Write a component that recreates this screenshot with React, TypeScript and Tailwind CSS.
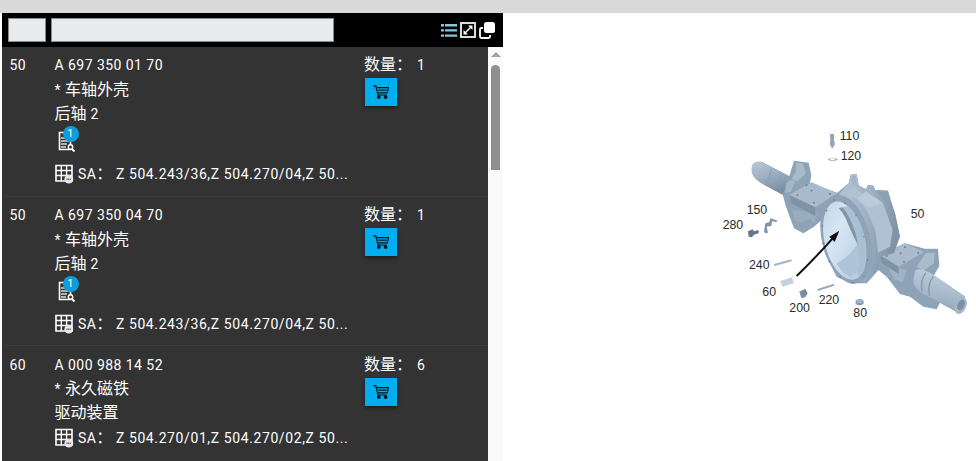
import React from "react";

const font = { fontFamily: '"Roboto","Noto Sans CJK SC",sans-serif' };

function T({ s }: { s: string }) {
  return (
    <>
      {s.split(/([\u4e00-\u9fff：]+)/).map((p, i) =>
        /[\u4e00-\u9fff：]/.test(p) ? (
          <span key={i} className="text-[16px] tracking-normal">{p}</span>
        ) : (
          <span key={i}>{p}</span>
        )
      )}
    </>
  );
}

function DocIcon() {
  return (
    <span className="relative block w-[22px] h-[26px]">
      <svg width="20" height="22" viewBox="0 0 20 22" className="absolute left-0 top-[4px]">
        <path d="M3.5 1.5H11L14.5 5V18.5H3.5Z" fill="none" stroke="#fff" strokeWidth="1.6" />
        <path d="M5 7H13M5 10H13M5 13H11M5 16H10" stroke="#ddd" strokeWidth="1.5" />
        <circle cx="14.5" cy="16" r="2.2" fill="#333" stroke="#fff" strokeWidth="1.4" />
        <path d="M16 18L18.5 20.5" stroke="#fff" strokeWidth="1.8" />
      </svg>
      <span className="absolute left-[7px] top-[-1px] w-4 h-4 rounded-full bg-[#0d9ddb] text-white text-[11px] leading-4 text-center">1</span>
    </span>
  );
}

function GridIcon() {
  return (
    <svg width="20" height="20" viewBox="0 0 20 20" className="shrink-0">
      <path d="M1 1.5H17V17H1Z" fill="none" stroke="#fff" strokeWidth="1.6" />
      <path d="M1 6.5H17M1 11.5H17M6.3 1.5V17M11.6 1.5V17" stroke="#fff" strokeWidth="1.4" />
      <circle cx="13.8" cy="15.2" r="4.4" fill="#e8e8e8" />
      <path d="M11.5 15.2H16" stroke="#555" strokeWidth="1.6" strokeDasharray="1 .6" />
    </svg>
  );
}

function CartButton() {
  return (
    <div className="w-8 h-7 ml-px mt-[1px] bg-[#00aeef] shadow-[0_2px_4px_rgba(0,0,0,0.45)] flex items-center justify-center">
      <svg width="16" height="14" viewBox="0 0 16 14" fill="none" stroke="#02141c" strokeWidth="1.2">
        <path d="M0 0.8H2.8L5 10H13.6" />
        <path d="M3.2 2.6H15.5L14.2 7.8H4.4" />
        <path d="M5.2 5.2H13.6" />
        <circle cx="5.8" cy="12" r="1.3" fill="#02141c" />
        <circle cx="12.6" cy="12" r="1.3" fill="#02141c" />
      </svg>
    </div>
  );
}

type Row = { no: string; part: string; name: string; sub: string; qty: string; sa: string; doc: boolean; h: string };
const rows: Row[] = [
  { no: "50", part: "A 697 350 01 70", name: "* 车轴外壳", sub: "后轴 2", qty: "1", sa: "Z 504.243/36,Z 504.270/04,Z 50...", doc: true, h: "h-[149.7px]" },
  { no: "50", part: "A 697 350 04 70", name: "* 车轴外壳", sub: "后轴 2", qty: "1", sa: "Z 504.243/36,Z 504.270/04,Z 50...", doc: true, h: "h-[149.7px]" },
  { no: "60", part: "A 000 988 14 52", name: "* 永久磁铁", sub: "驱动装置", qty: "6", sa: "Z 504.270/01,Z 504.270/02,Z 50...", doc: false, h: "h-[115px]" },
];

function PartRow({ r }: { r: Row }) {
  return (
    <div className={`${r.h} shrink-0 flex border-b border-[#3d3d3d] last:border-b-0 pt-[6.3px] text-[14px] leading-6 tracking-[0.45px] text-white`}>
      <div className="w-[52.5px] pl-[7.5px]">{r.no}</div>
      <div className="w-[309.5px]">
        <div>{r.part}</div>
        <div className="pt-[0.7px]"><T s={r.name} /></div>
        <div><T s={r.sub} /></div>
        {r.doc && <div className="pl-[1px] mt-[1.3px] mb-[9px]"><DocIcon /></div>}
        <div className="flex items-center gap-[3px] h-6 mt-[1px]">
          <GridIcon />
          <span className="ml-[0.5px]"><T s="SA：" /></span>
          <span className="ml-[0.5px] tracking-[0.6px]">{r.sa}</span>
        </div>
      </div>
      <div>
        <div className="flex"><span className="w-[53px]"><T s="数量：" /></span><span>{r.qty}</span></div>
        <CartButton />
      </div>
    </div>
  );
}

function Axle() {
  const labels: [string, number, number][] = [
    ["110", 389, 61], ["120", 392, 119], ["150", 110, 282], ["280", 38, 327], ["50", 602, 293],
    ["240", 117, 446], ["60", 157, 527], ["200", 238, 577], ["220", 326, 552], ["80", 430, 592],
  ];
  const padDots: [number, number][] = [[262, 225], [305, 212], [360, 222], [312, 248], [290, 195], [530, 408], [585, 382], [625, 398], [582, 425], [572, 400]];
  const rimDots: [number, number][] = [[372, 240], [350, 272], [338, 318], [340, 370], [358, 425], [390, 470], [428, 488], [462, 468], [472, 420], [462, 350], [438, 285], [405, 250]];
  return (
    <svg viewBox="503 13 473 448" className="block w-full h-full">
      <defs>
        <linearGradient id="tube" x1="0" y1="0" x2="0.35" y2="1">
          <stop offset="0" stopColor="#b9c9d7" /><stop offset="0.5" stopColor="#9db0c2" /><stop offset="1" stopColor="#7c90a4" />
        </linearGradient>
        <linearGradient id="tube2" x1="0.3" y1="0" x2="0" y2="1">
          <stop offset="0" stopColor="#bdccda" /><stop offset="0.55" stopColor="#a2b5c6" /><stop offset="1" stopColor="#7f94a8" />
        </linearGradient>
        <linearGradient id="bowl" x1="0" y1="0" x2="0.6" y2="1">
          <stop offset="0" stopColor="#bed2e4" /><stop offset="0.45" stopColor="#d8e6f3" /><stop offset="1" stopColor="#b5cbdf" />
        </linearGradient>
        <linearGradient id="body" x1="0" y1="0" x2="1" y2="0.3">
          <stop offset="0" stopColor="#b2c3d2" /><stop offset="0.5" stopColor="#a0b3c6" /><stop offset="1" stopColor="#7f94a9" />
        </linearGradient>
        <filter id="soft"><feGaussianBlur stdDeviation="1.6" /></filter>
      </defs>
      <g transform="translate(710 120) scale(0.3333)">
        <g filter="url(#soft)">
          {/* whole silhouette */}
          <path d="M126 150L132 130L155 125L238 168L252 122L296 128L304 165L300 190L382 218L416 190L422 164L440 162L446 196L468 208L474 195L490 197L496 210L534 212L555 280L570 350L552 385L585 370L644 386L684 386L688 438L672 466L766 530L748 580L690 548L680 568L640 560L600 530L570 522L530 470L505 450L470 490L420 490L380 470L345 400L335 300L312 320L280 340L252 325L228 260L218 224L165 196Z" fill="#8ea3b7" />
          {/* left shaft */}
          <path d="M128 132Q140 120 158 128L238 172L218 224L165 196Q134 182 126 160Q122 142 128 132Z" fill="url(#tube)" />
          <path d="M186 146L170 192M212 160L196 208" stroke="#8b9fb2" strokeWidth="3" fill="none" />
          {/* left knuckle */}
          <path d="M258 128L278 130L288 160L262 184L244 178L258 152Z" fill="#a9bbcb" />
          <path d="M228 190Q240 176 256 184L244 214L226 218Z" fill="#a4b7c8" />
          {/* left carrier */}
          <path d="M245 268L255 300L272 308L300 296L312 310L322 280Z" fill="#9aadbf" />
          <path d="M238 225L305 187L382 220L316 262Z" fill="#a8bacb" />
          <path d="M238 225L316 262L316 288L244 250Z" fill="#7f93a7" />
          {/* right carrier */}
          <path d="M512 430L534 440L552 478L578 488L590 450L560 440Z" fill="#a0b2c3" />
          <path d="M510 405L585 370L642 396L566 440Z" fill="#aabccc" />
          <path d="M510 405L566 440L566 462L515 430Z" fill="#7f93a7" />
          {/* right knuckle */}
          <path d="M620 440L648 398L674 398L672 430L640 452Z" fill="#abbccb" />
          {/* right shaft */}
          <path d="M616 450Q640 444 672 466L766 530L748 580L656 530Q610 510 610 480Z" fill="url(#tube2)" />
          <path d="M648 458Q630 480 636 514M670 470Q652 490 658 528" stroke="#8499ac" strokeWidth="4" fill="none" />
          <ellipse cx="752" cy="557" rx="17" ry="26" transform="rotate(25 752 557)" fill="#a6b8c8" />
          <ellipse cx="753" cy="555" rx="10" ry="17" transform="rotate(25 753 555)" fill="#7a90a5" />
          {/* housing body */}
          <path d="M388 222L416 190L422 164L440 162L446 196L468 208L474 195L490 197L496 210L534 212L540 240L555 280L570 350L552 400L510 410L505 450L470 490L420 470Z" fill="url(#body)" />
          <path d="M432 200L462 224L520 252L548 330L540 380L504 398L496 330L470 270L440 236L395 222Z" fill="#b0c1d1" />
          <path d="M468 214L520 250L474 262L440 236Z" fill="#bccbd9" />
          <path d="M500 214L532 216L536 240L522 246Z" fill="#8ea1b4" />
          <path d="M424 168L438 168L438 190L426 190Z" fill="#a4b6c6" />
          {/* flange */}
          <ellipse cx="408" cy="358" rx="72" ry="136" transform="rotate(-14 408 358)" fill="#8ea3b7" />
          <ellipse cx="404" cy="362" rx="60" ry="120" transform="rotate(-14 404 362)" fill="url(#bowl)" />
          <path d="M414 258Q448 290 464 350Q472 400 462 452Q452 470 442 462Q450 400 438 350Q424 300 398 262Z" fill="#a9bfd3" />
          <path d="M398 262Q422 290 438 345Q442 360 444 376Q428 345 414 312Q404 284 386 264Z" fill="#7f95aa" />
          <path d="M442 372Q452 410 444 456L424 470Q396 462 380 430Q420 410 442 372Z" fill="#aec4d9" />
        </g>
        {padDots.map(([x, y], i) => <circle key={i} cx={x} cy={y} r="3" fill="#6f8398" />)}
        {rimDots.map(([x, y], i) => <circle key={i} cx={x} cy={y} r="2.2" fill="#5f7387" />)}
        {/* hardware */}
        <g filter="url(#soft)">
          <path d="M360 42H372V62L374 64V74L367 86L360 74V64L361 62Z" fill="#94a6b7" />
          <path d="M352 118Q368 108 386 118Q368 130 352 118Z" fill="#a9b9c8" />
          <ellipse cx="368" cy="118" rx="7" ry="3" fill="#fff" />
          <path d="M162 335L166 310L178 306L182 294L202 302L200 306L186 304L184 318L170 320L174 338L166 340Z" fill="#8195a8" />
          <path d="M114 334L128 328L132 334L146 330L146 340L132 344L126 352L116 350Z" fill="#62768a" />
          <path d="M192 432L244 418L245 424L194 438Z" fill="#a2b3c3" />
          <path d="M210 483L246 472L252 490L218 500Z" fill="#c4d3e0" />
          <path d="M322 507L372 491L373 497L324 513Z" fill="#98abbc" />
          <path d="M268 515L286 506L293 520L286 532L274 534Z" fill="#7a8ea1" />
          <path d="M437 542Q449 534 461 542V552Q449 560 437 552Z" fill="#8a9caf" />
          <ellipse cx="449" cy="543" rx="10" ry="6" fill="#a3b4c4" />
        </g>
        <path d="M260 468Q320 410 376 346" fill="none" stroke="#111" strokeWidth="6" />
        <path d="M388 332L358 350L374 366Z" fill="#111" />
        <g fill="#2a2a2a" fontSize="37" style={{ fontFamily: '"Liberation Sans",sans-serif' }}>
          {labels.map(([t, x, y]) => (
            <text key={t} x={x} y={y}>{t}</text>
          ))}
        </g>
      </g>
    </svg>
  );
}

export default function App() {
  return (
    <div className="w-[976px] h-[461px] overflow-hidden bg-white flex flex-col" style={font}>
      <div className="h-[13px] shrink-0 bg-[#d9d9d9]" />
      <div className="flex flex-1 min-h-0 pl-[2px]">
        <div className="w-[501px] flex flex-col shrink-0">
          <div className="h-[34px] shrink-0 bg-black flex items-center pl-[6px]">
            <div className="w-[38px] h-6 bg-[#e8ebee] border border-[#8a8a8a]" />
            <div className="w-[283px] h-6 ml-[5px] bg-[#e8ebee] border border-[#8a8a8a]" />
            <div className="ml-[107px] flex items-center">
              <svg width="16" height="15" viewBox="0 0 16 15">
                <g fill="#86c6e0">
                  <path d="M0 1h3v2.4H0zM0 6.2h3v2.4H0zM0 11.4h3v2.4H0z" />
                  <path d="M4 1h12v2.4H4zM4 6.2h12v2.4H4zM4 11.4h12v2.4H4z" />
                </g>
              </svg>
              <svg width="16" height="16" viewBox="0 0 16 16" className="ml-[3px]">
                <rect x="1" y="1" width="14" height="14" fill="none" stroke="#ddd" strokeWidth="2" />
                <path d="M4.5 11.5L11.5 4.5" stroke="#fff" strokeWidth="1.5" />
                <path d="M8 3.5H12.5V8ZM3.5 8V12.5H8Z" fill="#fff" />
              </svg>
              <svg width="17" height="17" viewBox="0 0 17 17" className="ml-[3px]">
                <path d="M4 6H2.5Q1 6 1 7.5V14.5Q1 16 2.5 16H9.5Q11 16 11 14.5V13" fill="none" stroke="#fff" strokeWidth="1.8" />
                <rect x="5" y="0" width="11" height="11" rx="2.5" fill="#fff" />
              </svg>
            </div>
          </div>
          <div className="flex flex-1 min-h-0">
            <div className="w-[486px] bg-[#333333] flex flex-col overflow-hidden">
              {rows.map((r, i) => <PartRow key={i} r={r} />)}
            </div>
            <div className="w-[15px] bg-[#fafafa] flex flex-col items-center">
              <div className="mt-[5px] w-0 h-0 border-x-[5px] border-x-transparent border-b-[5px] border-b-[#a3a3a3]" />
              <div className="mt-[8px] w-[9px] h-[105px] rounded-t-[5px] bg-[#8f8f8f]" />
            </div>
          </div>
        </div>
        <div className="flex-1 min-w-0"><Axle /></div>
      </div>
    </div>
  );
}
